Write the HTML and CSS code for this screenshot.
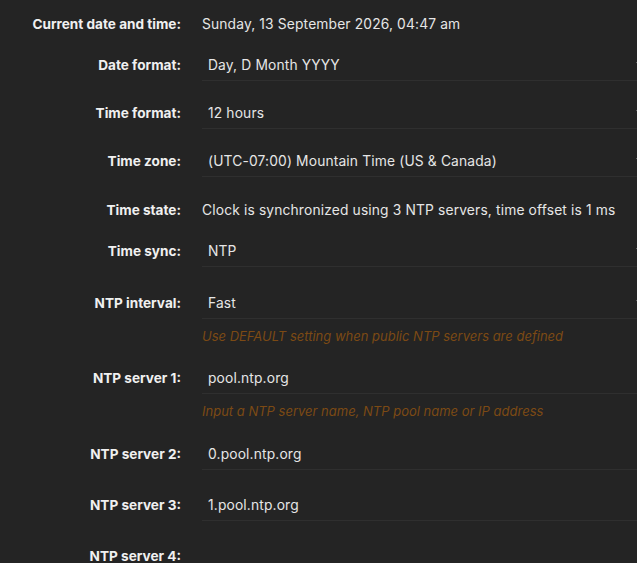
FILE: index.html
```html
<!DOCTYPE html>
<html lang="en">
<head>
<meta charset="utf-8">
<title>Time settings</title>
<link rel="stylesheet" href="styles.css">
</head>
<body>
<div class="form">
  <div class="row static">
    <div class="label">Current date and time:</div>
    <div class="text">Sunday, 13 September 2026, 04:47 am</div>
  </div>
  <div class="row">
    <div class="label">Date format:</div>
    <div class="field select"><span class="val">Day, D Month YYYY</span><span class="caret"></span></div>
  </div>
  <div class="row">
    <div class="label">Time format:</div>
    <div class="field select"><span class="val">12 hours</span><span class="caret"></span></div>
  </div>
  <div class="row">
    <div class="label">Time zone:</div>
    <div class="field select"><span class="val">(UTC-07:00) Mountain Time (US &amp; Canada)</span><span class="caret"></span></div>
  </div>
  <div class="row static">
    <div class="label">Time state:</div>
    <div class="text">Clock is synchronized using 3 NTP servers, time offset is 1 ms</div>
  </div>
  <div class="row loose">
    <div class="label">Time sync:</div>
    <div class="field select"><span class="val">NTP</span><span class="caret"></span></div>
  </div>
  <div class="row">
    <div class="label">NTP interval:</div>
    <div class="cell">
      <div class="field select"><span class="val">Fast</span><span class="caret"></span></div>
      <div class="hint">Use DEFAULT setting when public NTP servers are defined</div>
    </div>
  </div>
  <div class="row mid">
    <div class="label">NTP server 1:</div>
    <div class="cell">
      <div class="field"><span class="val">pool.ntp.org</span></div>
      <div class="hint">Input a NTP server name, NTP pool name or IP address</div>
    </div>
  </div>
  <div class="row wide">
    <div class="label">NTP server 2:</div>
    <div class="field"><span class="val">0.pool.ntp.org</span></div>
  </div>
  <div class="row wide">
    <div class="label">NTP server 3:</div>
    <div class="field"><span class="val">1.pool.ntp.org</span></div>
  </div>
  <div class="row">
    <div class="label">NTP server 4:</div>
    <div class="field"><span class="val"></span></div>
  </div>
</div>
</body>
</html>
```
FILE: styles.css
```css
html, body {
  margin: 0;
  padding: 0;
  background: #242424;
  overflow: hidden;
}
body {
  font-family: Inter, "Open Sans", sans-serif;
  color: #e6e6e6;
  width: 637px;
  height: 563px;
}
.form {
  width: 660px;
  padding-top: 7px;
}
.row {
  display: grid;
  grid-template-columns: 181px 1fr;
  column-gap: 21px;
  margin-bottom: 16px;
}
.row.static {
  margin-bottom: 15px;
}
.row.loose {
  margin-bottom: 20px;
}
.row.mid {
  margin-bottom: 17px;
}
.row.wide {
  margin-bottom: 19px;
}
.label {
  font-weight: 700;
  font-size: 13.6px;
  color: #f0f0f0;
  text-align: right;
  height: 32px;
  line-height: 32px;
  white-space: nowrap;
}
.static .label {
  height: 20px;
  line-height: 20px;
  padding-top: 7px;
}
.text {
  font-size: 13.8px;
  letter-spacing: 0.15px;
  line-height: 20px;
  padding-top: 7px;
  white-space: nowrap;
}
.cell {
  display: flex;
  flex-direction: column;
}
.field {
  height: 31px;
  border-bottom: 1px solid #2f2f2f;
  display: flex;
  align-items: center;
  padding-left: 6px;
  font-size: 13.8px;
  letter-spacing: 0.15px;
  white-space: nowrap;
}
.select .caret {
  margin-left: auto;
  margin-right: 16px;
  width: 0;
  height: 0;
  border-left: 4px solid transparent;
  border-right: 4px solid transparent;
  border-top: 5px solid #8a8a8a;
}
.hint {
  margin-top: 7px;
  font-size: 13px;
  line-height: 20px;
  font-style: italic;
  color: #7c4a14;
  white-space: nowrap;
}
```
